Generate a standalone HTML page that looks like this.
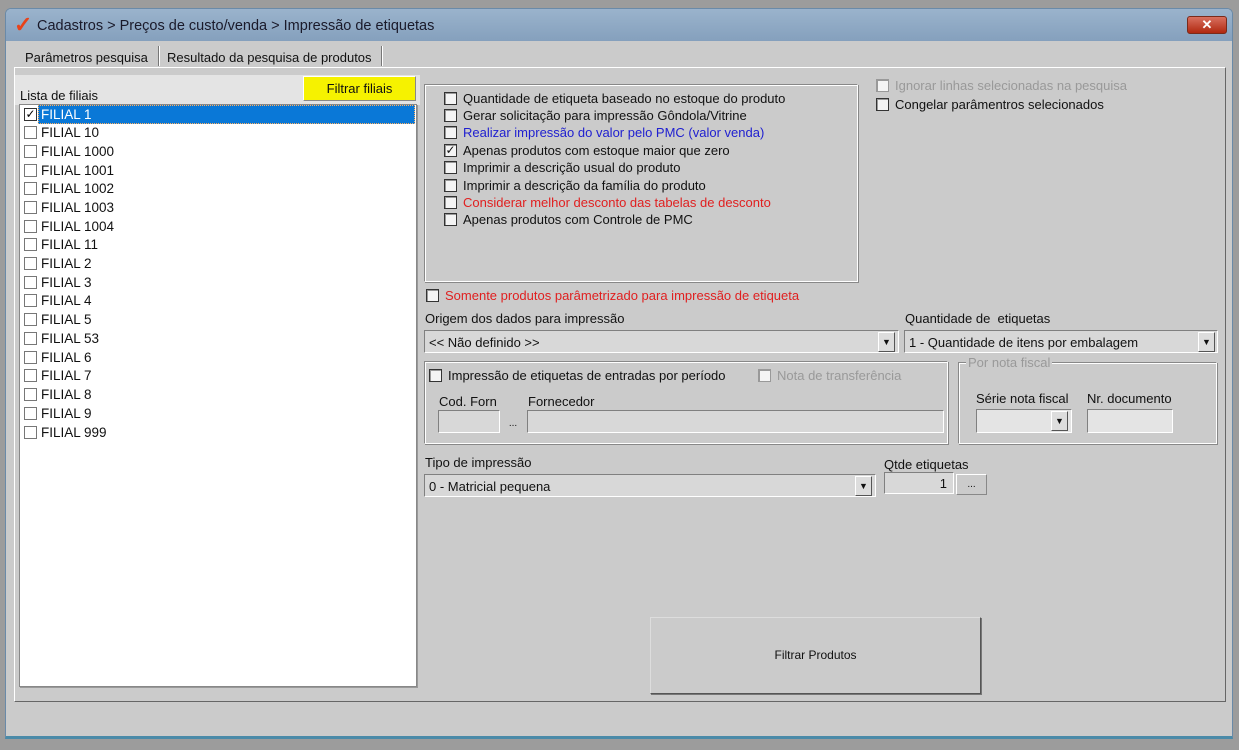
<!DOCTYPE html>
<html><head><meta charset="utf-8"><style>
*{margin:0;padding:0;box-sizing:border-box}
body{width:1239px;height:750px;background:#9c9c9c;font-family:"Liberation Sans",sans-serif;font-size:13px;color:#111;position:relative;overflow:hidden}
.a{position:absolute;white-space:nowrap}
.win{left:5px;top:8px;width:1228px;height:731px;background:#cbcbcb;border:1px solid #6a8aa8;border-radius:6px 6px 0 0;border-bottom:3px solid #4a8aa8}
.title{left:0;top:0;width:100%;height:32px;background:linear-gradient(#9ab3cc,#85a0bd);border-radius:5px 5px 0 0}
.cb{width:13px;height:13px;border:1px solid #333;background:#f4f4f4;box-shadow:inset 1px 1px 0 #999}
.sunk{border:1px solid;border-color:#808080 #fff #fff #808080;background:#d8d8d8}
.grp{border:1px solid;border-color:#888 #fff #fff #888;box-shadow:inset 1px 1px 0 #fff,1px 1px 0 #888}
.drop{width:17px;height:20px;background:#ddd;border:1px solid;border-color:#fff #555 #555 #fff;font-size:9px;text-align:center;line-height:18px}
.li{left:22px;width:390px;height:19px;font-size:13.5px;line-height:19px}
.li .cb{position:absolute;left:2px;top:3px;border-color:#777;background:#fff;box-shadow:none}
.li span{position:absolute;left:19px}
.opt{left:444px;width:400px;height:17px;line-height:15px}
.opt .cb{position:absolute;left:0;top:1px}
.opt span{position:absolute;left:19px;white-space:nowrap}
</style></head><body>
<div class="a win">
 <div class="a title">
  <div class="a" style="left:8px;top:3px;color:#e8431a;font-size:22px;font-weight:bold">✓</div>
  <div class="a" style="left:31px;top:9px;font-size:14.5px;color:#1a1a2a">Cadastros &gt; Preços de custo/venda &gt; Impressão de etiquetas</div>
  <div class="a" style="left:1181px;top:7px;width:40px;height:18px;background:linear-gradient(#d87060,#b02810);border:1px solid #7a2a1a;border-radius:3px;color:#fff;text-align:center;font-weight:bold;line-height:16px;font-size:13px">✕</div>
 </div>
</div>
<div class="a" style="left:25px;top:50px">Parâmetros pesquisa</div>
<div class="a" style="left:158px;top:46px;width:2px;height:20px;border-left:1px solid #777;border-right:1px solid #fff"></div>
<div class="a" style="left:167px;top:50px">Resultado da pesquisa de produtos</div>
<div class="a" style="left:381px;top:46px;width:2px;height:20px;border-left:1px solid #777;border-right:1px solid #fff"></div>
<div class="a" style="left:14px;top:67px;width:1212px;height:635px;border:1px solid;border-color:#fff #666 #666 #fff"></div>
<div class="a" style="left:15px;top:75px;width:405px;height:30px;background:#e4e4e4"></div>
<div class="a" style="left:20px;top:88px">Lista de filiais</div>
<div class="a" style="left:303px;top:76px;width:113px;height:25px;background:#f6f200;border:1px solid;border-color:#fff #888 #888 #fff;text-align:center;line-height:23px">Filtrar filiais</div>
<div class="a" style="left:19px;top:104px;width:398px;height:583px;background:#fff;border:1px solid #888;box-shadow:1px 1px 0 #999"></div>
<div class="a" style="left:38px;top:105px;width:377px;height:19px;background:#0a78d7;border:1px dotted #ffb060"></div>
<div class="a li" style="top:105px;color:#fff"><div class="cb" style="border-color:#333;color:#000;font-size:12px;line-height:11px;text-align:center">✓</div><span>FILIAL 1</span></div>
<div class="a li" style="top:123px"><div class="cb"></div><span>FILIAL 10</span></div>
<div class="a li" style="top:142px"><div class="cb"></div><span>FILIAL 1000</span></div>
<div class="a li" style="top:161px"><div class="cb"></div><span>FILIAL 1001</span></div>
<div class="a li" style="top:179px"><div class="cb"></div><span>FILIAL 1002</span></div>
<div class="a li" style="top:198px"><div class="cb"></div><span>FILIAL 1003</span></div>
<div class="a li" style="top:217px"><div class="cb"></div><span>FILIAL 1004</span></div>
<div class="a li" style="top:235px"><div class="cb"></div><span>FILIAL 11</span></div>
<div class="a li" style="top:254px"><div class="cb"></div><span>FILIAL 2</span></div>
<div class="a li" style="top:273px"><div class="cb"></div><span>FILIAL 3</span></div>
<div class="a li" style="top:291px"><div class="cb"></div><span>FILIAL 4</span></div>
<div class="a li" style="top:310px"><div class="cb"></div><span>FILIAL 5</span></div>
<div class="a li" style="top:329px"><div class="cb"></div><span>FILIAL 53</span></div>
<div class="a li" style="top:348px"><div class="cb"></div><span>FILIAL 6</span></div>
<div class="a li" style="top:366px"><div class="cb"></div><span>FILIAL 7</span></div>
<div class="a li" style="top:385px"><div class="cb"></div><span>FILIAL 8</span></div>
<div class="a li" style="top:404px"><div class="cb"></div><span>FILIAL 9</span></div>
<div class="a li" style="top:423px"><div class="cb"></div><span>FILIAL 999</span></div>

<div class="a grp" style="left:424px;top:84px;width:434px;height:198px"></div>
<div class="a opt" style="top:91px"><div class="cb"></div><span>Quantidade de etiqueta baseado no estoque do produto</span></div>
<div class="a opt" style="top:108px"><div class="cb"></div><span>Gerar solicitação para impressão Gôndola/Vitrine</span></div>
<div class="a opt" style="top:125px"><div class="cb"></div><span style="color:#2020d0">Realizar impressão do valor pelo PMC (valor venda)</span></div>
<div class="a opt" style="top:143px"><div class="cb" style="font-size:12px;line-height:11px;text-align:center">✓</div><span>Apenas produtos com estoque maior que zero</span></div>
<div class="a opt" style="top:160px"><div class="cb"></div><span>Imprimir a descrição usual do produto</span></div>
<div class="a opt" style="top:178px"><div class="cb"></div><span>Imprimir a descrição da família do produto</span></div>
<div class="a opt" style="top:195px"><div class="cb"></div><span style="color:#e02020">Considerar melhor desconto das tabelas de desconto</span></div>
<div class="a opt" style="top:212px"><div class="cb"></div><span>Apenas produtos com Controle de PMC</span></div>

<div class="a opt" style="left:876px;top:78px"><div class="cb" style="border-color:#999"></div><span style="color:#999">Ignorar linhas selecionadas na pesquisa</span></div>
<div class="a opt" style="left:876px;top:97px"><div class="cb"></div><span>Congelar parâmentros selecionados</span></div>

<div class="a opt" style="left:426px;top:288px"><div class="cb"></div><span style="color:#e02020">Somente produtos parâmetrizado para impressão de etiqueta</span></div>
<div class="a" style="left:425px;top:311px">Origem dos dados para impressão</div>
<div class="a" style="left:905px;top:311px">Quantidade de &nbsp;etiquetas</div>
<div class="a sunk" style="left:424px;top:330px;width:475px;height:23px;padding:4px 4px">&lt;&lt; Não definido &gt;&gt;</div>
<div class="a drop" style="left:878px;top:332px">▼</div>
<div class="a sunk" style="left:904px;top:330px;width:314px;height:23px;padding:4px 4px">1 - Quantidade de itens por embalagem</div>
<div class="a drop" style="left:1198px;top:332px">▼</div>

<div class="a grp" style="left:424px;top:361px;width:524px;height:83px"></div>
<div class="a opt" style="left:429px;top:368px"><div class="cb"></div><span>Impressão de etiquetas de entradas por período</span></div>
<div class="a opt" style="left:758px;top:368px"><div class="cb" style="border-color:#999"></div><span style="color:#999">Nota de transferência</span></div>
<div class="a" style="left:439px;top:394px">Cod. Forn</div>
<div class="a" style="left:528px;top:394px">Fornecedor</div>
<div class="a sunk" style="left:438px;top:410px;width:62px;height:23px"></div>
<div class="a" style="left:502px;top:412px;width:22px;height:21px;font-size:10px;text-align:center;line-height:24px">...</div>
<div class="a sunk" style="left:527px;top:410px;width:417px;height:23px"></div>

<div class="a grp" style="left:958px;top:362px;width:259px;height:82px"></div>
<div class="a" style="left:966px;top:355px;background:#cbcbcb;color:#999;padding:0 2px">Por nota fiscal</div>
<div class="a" style="left:976px;top:391px">Série nota fiscal</div>
<div class="a" style="left:1087px;top:391px">Nr. documento</div>
<div class="a sunk" style="left:976px;top:409px;width:96px;height:24px;background:#e4e4e4"></div>
<div class="a drop" style="left:1051px;top:411px">▼</div>
<div class="a sunk" style="left:1087px;top:409px;width:86px;height:24px;background:#e4e4e4"></div>

<div class="a" style="left:425px;top:455px">Tipo de impressão</div>
<div class="a" style="left:884px;top:457px">Qtde etiquetas</div>
<div class="a sunk" style="left:424px;top:474px;width:452px;height:23px;padding:4px 4px">0 - Matricial pequena</div>
<div class="a drop" style="left:855px;top:476px">▼</div>
<div class="a sunk" style="left:884px;top:472px;width:70px;height:22px;text-align:right;padding:3px 6px">1</div>
<div class="a" style="left:956px;top:474px;width:31px;height:21px;border:1px solid;border-color:#fff #888 #888 #fff;text-align:center;font-size:10px;line-height:20px">...</div>

<div class="a" style="left:650px;top:617px;width:331px;height:77px;border:1px solid;border-color:#ddd #555 #555 #ddd;box-shadow:1px 1px 0 #777;text-align:center;line-height:75px;font-size:12px">Filtrar Produtos</div>
</body></html>
